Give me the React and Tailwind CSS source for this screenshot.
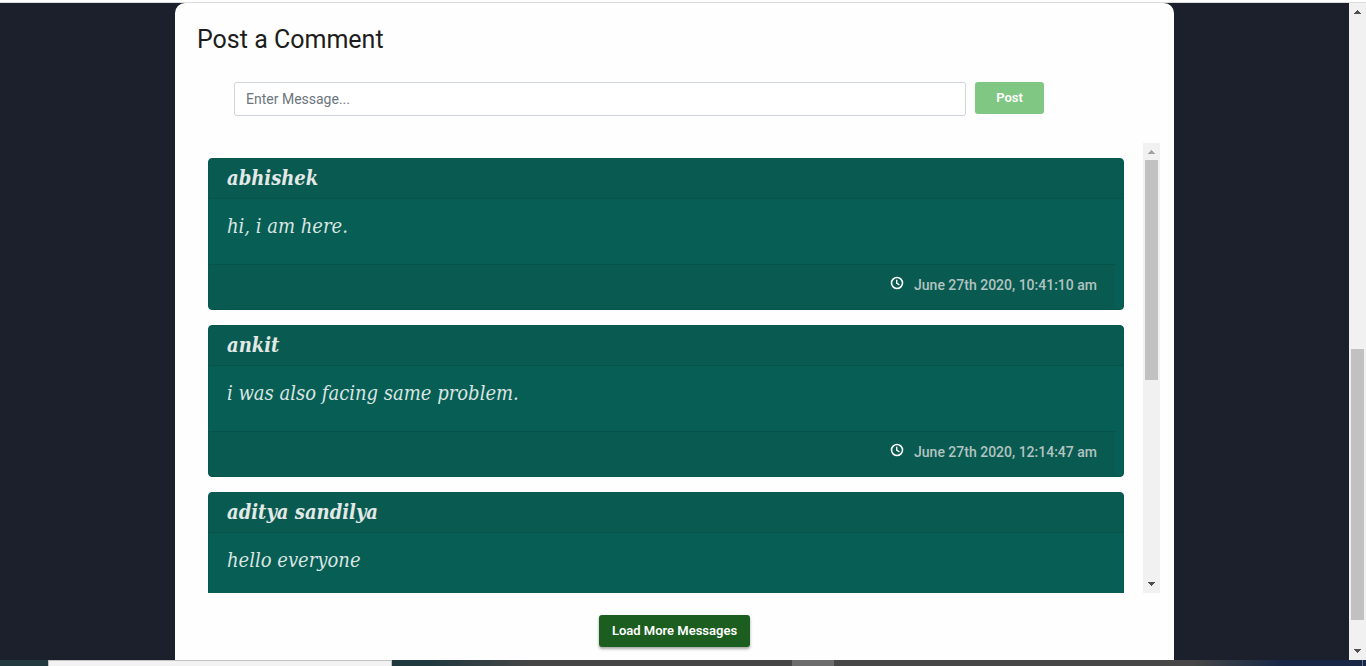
import React from "react";

const comments = [
  { author: "abhishek", text: "hi, i am here.", time: "June 27th 2020, 10:41:10 am" },
  { author: "ankit", text: "i was also facing same problem.", time: "June 27th 2020, 12:14:47 am" },
  { author: "aditya sandilya", text: "hello everyone" },
];

function ClockIcon() {
  return (
    <svg viewBox="0 0 14 14" className="mt-[11px] size-3.5" fill="none" stroke="#fff" aria-hidden="true">
      <circle cx="7" cy="7" r="5.5" strokeWidth="1.6" />
      <path d="M6.7 3.8V7.2L9.4 8.8" strokeWidth="1.4" />
    </svg>
  );
}

function Arrow({ down, className }) {
  return (
    <svg viewBox="0 0 17 17" className={`size-[17px] shrink-0 ${className}`} fill="currentColor" shapeRendering="crispEdges" aria-hidden="true">
      {down ? (
        <path d="M5 6h7v1h-1v1h-1v1h-1v1H8V9H7V8H6V7H5z" />
      ) : (
        <path d="M5 11h7v-1h-1V9h-1V8H9V7H8v1H7v1H6v1H5z" />
      )}
    </svg>
  );
}

function CommentCard({ author, text, time }) {
  return (
    <article className="shrink-0 overflow-hidden rounded border border-[#08564d] bg-[#075e54] font-['DejaVu_Serif_Condensed','DejaVu_Serif',serif]">
      <h2 className="h-10 border-b border-[#07534a] bg-[#095a50] px-[18px] text-[20px] leading-[38px] font-bold text-[#e3e9e7] italic">
        {author}
      </h2>
      <p className="h-[65px] px-[18px] pt-3 text-[20px] leading-[30px] text-[#dbe5e3] italic">{text}</p>
      {time && (
        <div className="mr-2 flex h-[45px] justify-end gap-2.5 border-t border-[#07534a] bg-[#095a50] pr-[18px]">
          <ClockIcon />
          <time className="font-[Roboto,sans-serif] text-[14px] leading-10 font-medium text-[#b2c4c1]">{time}</time>
        </div>
      )}
    </article>
  );
}

export default function App() {
  return (
    <div className="flex h-screen flex-col overflow-hidden bg-white font-[Roboto,sans-serif]">
      <div className="h-[3px] shrink-0 border-b border-[#dadce0] bg-white" />
      <div className="flex min-h-0 flex-1">
        <main className="flex min-w-0 flex-1 bg-[#1b202c] px-[175px]">
          <section className="flex min-w-0 flex-1 flex-col rounded-t-[10px] bg-[#fefefe]">
            <h1 className="px-[22px] pt-[21px] text-[25px] leading-8 text-[#1c1c1c]">Post a Comment</h1>
            <form className="mt-[26px] flex items-start gap-[9px] pr-[130px] pl-[59px]" onSubmit={(e) => e.preventDefault()}>
              <input
                type="text"
                aria-label="Message"
                placeholder="Enter Message..."
                className="h-[34px] min-w-0 flex-1 rounded-[3px] border border-[#ced4da] bg-white px-[11px] text-[14px] text-[#495057] outline-none placeholder:text-[#6c757d]"
              />
              <button type="submit" className="h-8 w-[69px] rounded-[3px] bg-[#81c784] text-[13px] font-semibold text-white">
                Post
              </button>
            </form>
            <div className="mt-[27px] mr-3.5 ml-[33px] flex h-[450px] shrink-0">
              <div className="flex min-w-0 flex-1 flex-col gap-[15px] overflow-hidden pt-[15px] pr-[19px]">
                {comments.map((c) => (
                  <CommentCard key={c.author} {...c} />
                ))}
              </div>
              <div className="flex w-[17px] shrink-0 flex-col bg-[#f1f1f1]" aria-hidden="true">
                <Arrow className="text-[#a3a3a3]" />
                <div className="mx-0.5 h-[220px] bg-[#c1c1c1]" />
                <Arrow down className="mt-auto text-[#505050]" />
              </div>
            </div>
            <button
              type="button"
              className="mt-[22px] h-8 w-[151px] shrink-0 self-center rounded-[3px] bg-[#1b5e20] text-[13px] font-semibold text-white shadow-[0_2px_3px_rgba(0,0,0,0.35)]"
            >
              Load More Messages
            </button>
          </section>
        </main>
        <div className="flex w-[17px] shrink-0 flex-col bg-[#f1f1f1]" aria-hidden="true">
          <Arrow className="text-[#505050]" />
          <div className="mx-0.5 mt-auto h-[271px] bg-[#c1c1c1]" />
          <Arrow down className="mt-[23px] text-[#505050]" />
        </div>
      </div>
      <div className="flex h-1.5 shrink-0" aria-hidden="true">
        <div className="w-12 bg-[#21393f]" />
        <div className="w-[344px] border-x border-t border-[#c0c3bf] bg-[#f2f2f2]" />
        <div className="w-[400px] bg-linear-to-r from-[#20393f] from-10% to-[#464646] to-35%" />
        <div className="w-[42px] bg-[#6c6c6c]" />
        <div className="flex-1 bg-linear-to-r from-[#464746] from-68% to-[#182646] to-85%" />
        <div className="w-1 border-l border-[#69748a] bg-[#182646]" />
      </div>
    </div>
  );
}
